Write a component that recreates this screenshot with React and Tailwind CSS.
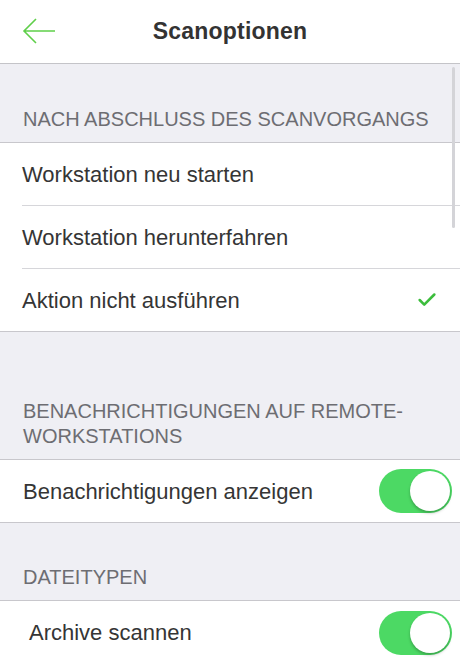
import { Check } from 'lucide-react'

function SectionHeader({ height, children }) {
  return (
    <div
      className={`flex flex-col justify-end px-[23px] pb-[10px] text-[20px] leading-[25px] uppercase text-[#6d6d72] border-b border-[#c8c7cc] ${height}`}
    >
      {children}
    </div>
  )
}

function Toggle() {
  return (
    <div className="w-[73px] h-[44px] rounded-full bg-[#4cd964] flex items-center justify-end p-[2px]">
      <div className="w-[40px] h-[40px] rounded-full bg-white shadow-[0_2px_3px_rgba(0,0,0,0.25)]" />
    </div>
  )
}

export default function App() {
  return (
    <div className="relative w-[460px] h-[661px] overflow-hidden bg-[#efeff4] font-['Liberation_Sans',Arial,sans-serif] text-[#353535]">
      <header className="h-[64px] bg-white border-b border-[#c4c4c8] flex items-center relative">
        <svg className="absolute left-[22px] top-[17px]" width="34" height="28" viewBox="0 0 34 28" fill="none">
          <path d="M33 14H2M14 2L2 14l12 12" stroke="#5fcf4a" strokeWidth="1.6" />
        </svg>
        <h1 className="w-full text-center text-[23px] font-bold text-[#333] tracking-[0.2px]">Scanoptionen</h1>
      </header>

      <div className="absolute right-[5px] top-[67px] w-[3px] h-[161px] rounded-full bg-[#d4d4d8]" />

      <SectionHeader height="h-[79px]">Nach Abschluss des Scanvorgangs</SectionHeader>
      <div className="bg-white border-b border-[#c8c7cc] text-[22px]">
        <div className="ml-[22px] h-[63px] flex items-center border-b border-[#d6d6da]">Workstation neu starten</div>
        <div className="ml-[22px] h-[63px] flex items-center border-b border-[#d6d6da]">Workstation herunterfahren</div>
        <div className="ml-[22px] h-[62px] flex items-center justify-between pr-[22px]">
          <span>Aktion nicht ausführen</span>
          <Check className="w-[22px] h-[22px] text-[#3cbd3c]" strokeWidth={2.8} />
        </div>
      </div>

      <SectionHeader height="h-[128px]">
        <span>Benachrichtigungen auf Remote-</span>
        <span>Workstations</span>
      </SectionHeader>
      <div className="bg-white border-b border-[#c8c7cc] h-[63px] flex items-center justify-between pl-[23px] pr-[8px] text-[22px]">
        <span>Benachrichtigungen anzeigen</span>
        <Toggle />
      </div>

      <SectionHeader height="h-[78px]">Dateitypen</SectionHeader>
      <div className="bg-white h-[63px] flex items-center justify-between pl-[29px] pr-[8px] text-[22px]">
        <span>Archive scannen</span>
        <Toggle />
      </div>
    </div>
  )
}
